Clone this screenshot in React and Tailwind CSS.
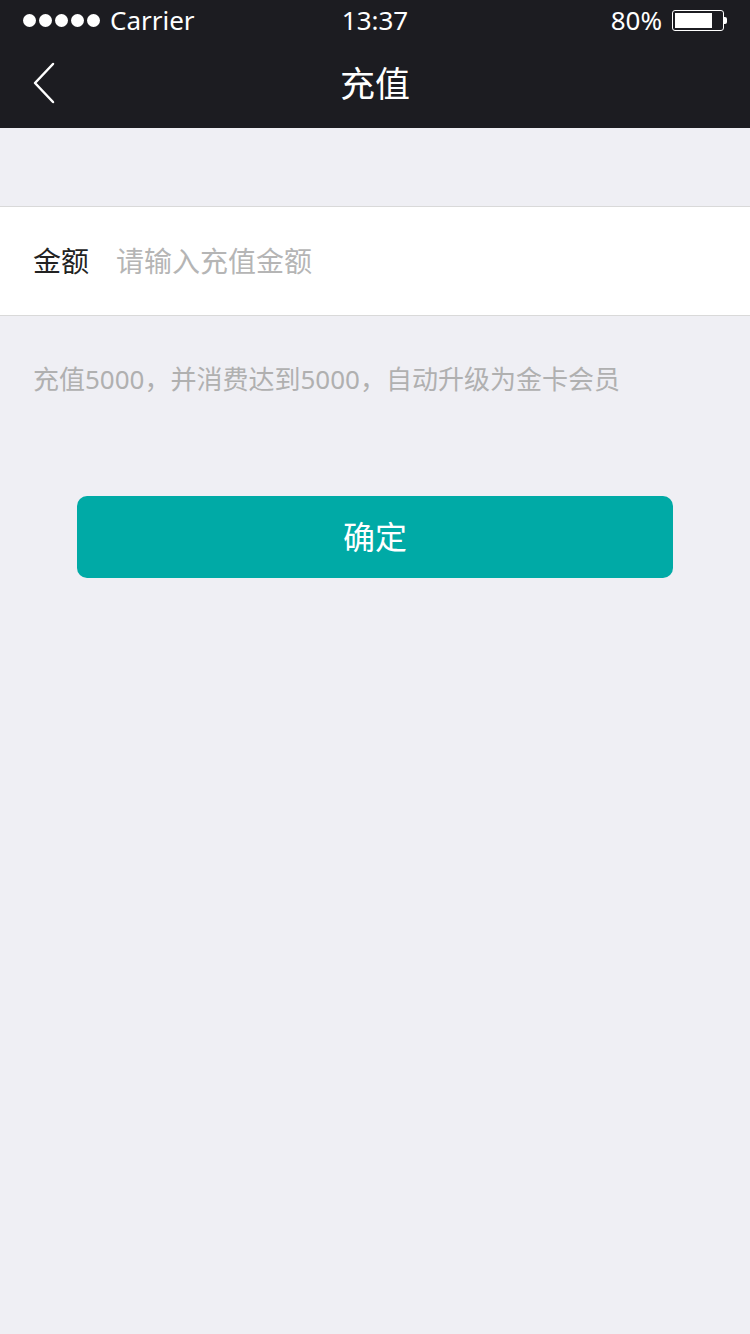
import React, { useState } from "react";

const font = { fontFamily: '"Noto Sans", "Noto Sans CJK SC", sans-serif' };

export default function App() {
  const [amount, setAmount] = useState("");
  return (
    <div className="min-h-[1334px] w-[750px] bg-[#efeff4]" style={font}>
      <header className="bg-[#1c1c21] text-white">
        <div className="relative flex h-[40px] items-center justify-between px-[23px]">
          <div className="flex items-center">
            <div className="flex gap-[3px]">
              {[0, 1, 2, 3, 4].map((i) => (
                <span key={i} className="block h-[13px] w-[13px] rounded-full bg-white" />
              ))}
            </div>
            <span className="ml-[10px] text-[26px] leading-none">Carrier</span>
          </div>
          <span className="absolute left-1/2 -translate-x-1/2 text-[26px] leading-none">13:37</span>
          <div className="flex items-center">
            <span className="text-[26px] leading-none">80%</span>
            <div className="ml-[10px] flex items-center">
              <div className="h-[21px] w-[52px] rounded-[3px] border-[1.5px] border-white p-[2px]">
                <div className="h-full w-[80%] bg-white" />
              </div>
              <div className="h-[7px] w-[3px] rounded-r-[2px] bg-white" />
            </div>
          </div>
        </div>
        <div className="relative flex h-[88px] items-center justify-center">
          <button className="absolute left-[32px] top-[22px]">
            <svg width="24" height="42" viewBox="0 0 24 42" fill="none">
              <path d="M21 2 L3 21 L21 40" stroke="white" strokeWidth="2.5" strokeLinecap="round" strokeLinejoin="round" />
            </svg>
          </button>
          <h1 className="text-[35px] font-normal">充值</h1>
        </div>
      </header>

      <div className="h-[78px]" />

      <div className="flex h-[110px] items-center border-y border-[#d9d9d9] bg-white px-[33px]">
        <span className="text-[28px] text-[#222]">金额</span>
        <input
          type="text"
          value={amount}
          onChange={(e) => setAmount(e.target.value)}
          placeholder="请输入充值金额"
          className="ml-[27px] flex-1 bg-transparent text-[28px] text-[#333] outline-none placeholder:text-[#b5b5b5]"
          style={font}
        />
      </div>

      <p className="px-[33px] pt-[44px] text-[26px] text-[#b0b0b0]">
        充值5000，并消费达到5000，自动升级为金卡会员
      </p>

      <div className="flex justify-center pt-[97px]">
        <button className="h-[82px] w-[596px] rounded-[10px] bg-[#00aaa6] text-[32px] text-white">
          确定
        </button>
      </div>
    </div>
  );
}
